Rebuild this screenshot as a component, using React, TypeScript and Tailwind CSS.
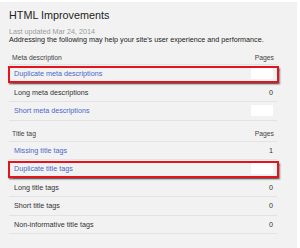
import type { ReactNode } from 'react'

type Row = { label: string; value?: string; link?: boolean; boxed?: boolean; hidden?: boolean }

const META: Row[] = [
  { label: 'Duplicate meta descriptions', link: true, boxed: true, hidden: true },
  { label: 'Long meta descriptions', value: '0' },
  { label: 'Short meta descriptions', link: true, hidden: true },
]

const TITLE: Row[] = [
  { label: 'Missing title tags', link: true, value: '1' },
  { label: 'Duplicate title tags', link: true, boxed: true, hidden: true },
  { label: 'Long title tags', value: '0' },
  { label: 'Short title tags', value: '0' },
  { label: 'Non-informative title tags', value: '0' },
]

function Cell({ row }: { row: Row }) {
  return (
    <div className="relative flex h-[18.5px] items-center justify-between border-b border-[#e3e3e3] pl-[5px] pr-[4px] text-[7.2px] leading-[9px]">
      <span className={row.link ? 'text-[#4a67c9]' : 'text-[#333]'}>{row.label}</span>
      {row.hidden ? (
        <span className="h-[11px] w-[22px] bg-white" />
      ) : (
        <span className="text-[#333]">{row.value}</span>
      )}
      {row.boxed ? (
        <div className="pointer-events-none absolute -left-[1px] -right-[2px] top-[1px] bottom-0 border-2 border-[#e3141c] shadow-[1px_1.5px_1.5px_rgba(0,0,0,0.55)]" />
      ) : null}
    </div>
  )
}

function Table({ head, rows }: { head: string; rows: Row[] }): ReactNode {
  return (
    <div>
      <div className="flex h-[14px] items-end justify-between border-b border-[#e3e3e3] pb-[2.5px] pl-[3px] pr-[3px] text-[6.8px] leading-[8px] text-[#444]">
        <span>{head}</span>
        <span>Pages</span>
      </div>
      {rows.map((r) => (
        <Cell key={r.label} row={r} />
      ))}
    </div>
  )
}

export default function App() {
  return (
    <div className="h-[248px] w-[300px] overflow-hidden bg-white pr-[3px] pt-[2px]">
      <div className="h-full bg-[#f2f2f2] pl-[9px] pr-[20px] pt-[6px] font-['Liberation_Sans',Arial,sans-serif]">
        <h1 className="text-[10.8px] leading-[14px] text-[#222]">HTML Improvements</h1>
        <p className="mt-[6px] text-[7.2px] leading-[8px] text-[#9a9a9a]">Last updated Mar 24, 2014</p>
        <p className="text-[7.2px] leading-[8px] text-[#222]">
          Addressing the following may help your site's user experience and performance.
        </p>
        <div className="mt-[7px]">
          <Table head="Meta description" rows={META} />
        </div>
        <div className="mt-[7px]">
          <Table head="Title tag" rows={TITLE} />
        </div>
      </div>
    </div>
  )
}
